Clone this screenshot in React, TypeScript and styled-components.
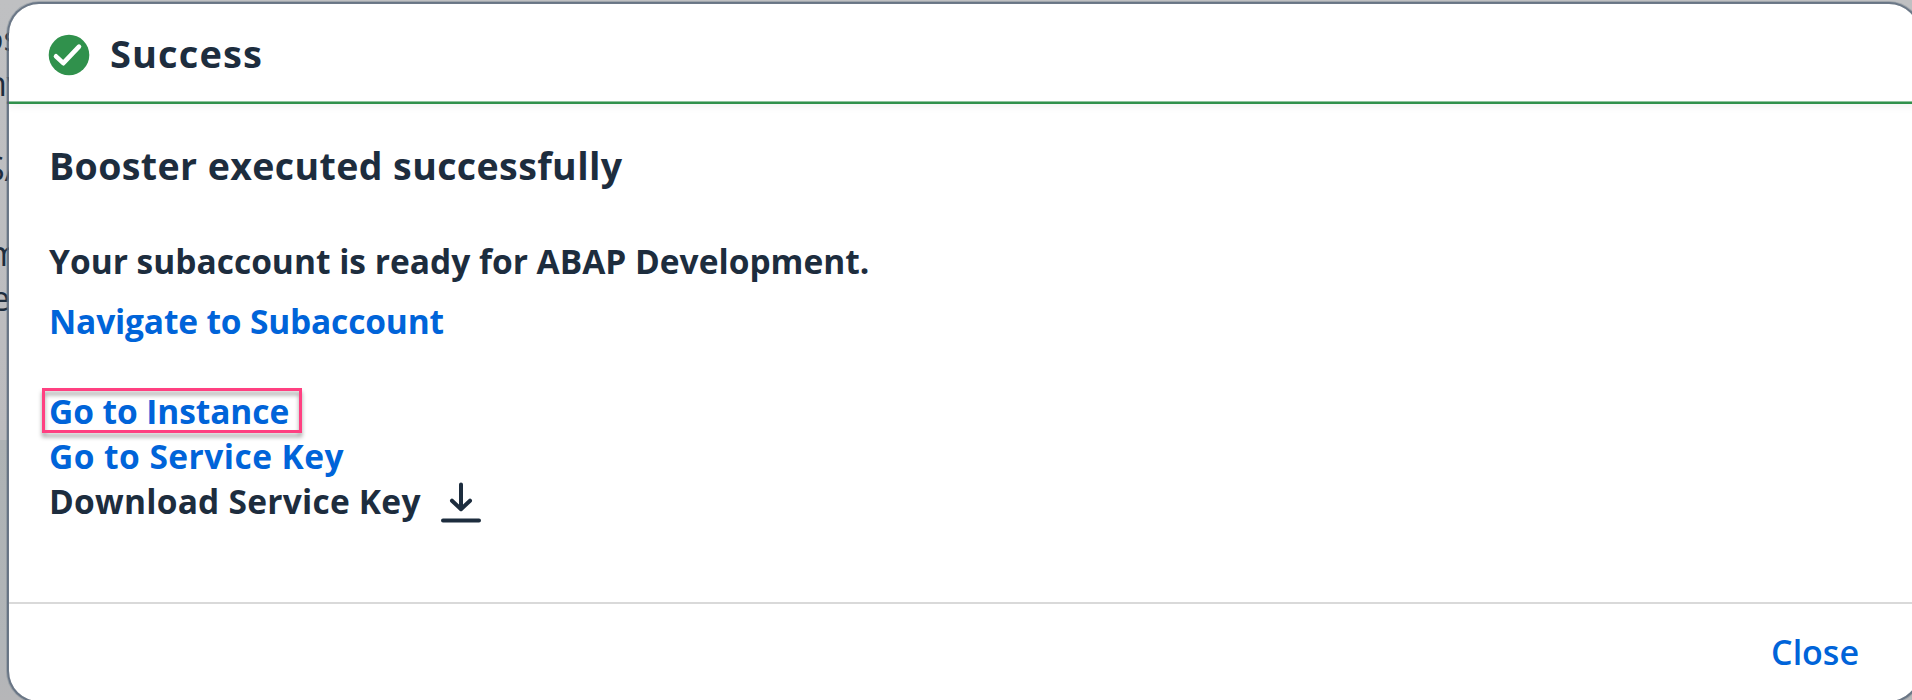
import React from "react";
import styled, { createGlobalStyle } from "styled-components";

const ink = "#1d2d3e";
const link = "#0064d9";

const GlobalStyle = createGlobalStyle`
  * { box-sizing: border-box; }
  body { margin: 0; overflow: hidden; }
  h1, h2, p { margin: 0; }
`;

const Page = styled.div`
  position: relative;
  width: 1912px;
  height: 700px;
  overflow: hidden;
  background: linear-gradient(#bfc0c2 0, #bbbbbe 440px, #adb2b4 440px, #b1b5b8 640px, #b6b6b8 700px);
  font-family: "Open Sans", "Noto Sans", sans-serif;
  color: ${ink};
`;

const Backdrop = styled.div`
  width: 10px;
  padding-top: 16px;
  overflow: hidden;
`;

const BackdropLine = styled.div<{ $shift: number; $gap?: number }>`
  margin-left: ${(p) => p.$shift}px;
  margin-top: ${(p) => p.$gap ?? 0}px;
  font-size: 34px;
  font-weight: 400;
  line-height: 45px;
  height: 45px;
  white-space: nowrap;
`;

const Dialog = styled.section`
  position: absolute;
  left: 7px;
  top: 2px;
  width: 1914px;
  height: 701px;
  display: flex;
  flex-direction: column;
  background: #fff;
  background-clip: padding-box;
  border: 2px solid rgba(91, 106, 124, 0.82);
  border-radius: 32px;
  box-shadow: 0 0 0 1px rgba(91, 106, 124, 0.3);
  overflow: hidden;
`;

const Header = styled.header`
  flex: none;
  height: 100px;
  display: flex;
  align-items: center;
  gap: 20px;
  padding: 3px 40px 0 39px;
  border-bottom: 2px solid #30914c;
  box-shadow: inset 0 -1px 0 rgba(48, 145, 76, 0.55), 0 2px 8px rgba(48, 80, 70, 0.08);
`;

const Title = styled.h1`
  font-size: 38px;
  font-weight: 700;
  line-height: 48px;
  letter-spacing: 1.1px;
  padding-bottom: 4px;
`;

const Content = styled.div`
  flex: 1;
  display: flex;
  flex-direction: column;
  align-items: flex-start;
  padding: 38px 40px 0;
`;

const Heading = styled.h2`
  font-size: 37.5px;
  font-weight: 700;
  line-height: 48px;
  letter-spacing: 0.4px;
  margin-bottom: 49px;
  white-space: nowrap;
`;

const Line = styled.p<{ $spacing?: number; $after?: number }>`
  display: flex;
  font-size: 33.5px;
  font-weight: 700;
  line-height: 45px;
  height: 45px;
  white-space: nowrap;
  letter-spacing: ${(p) => p.$spacing ?? 0}px;
  margin-bottom: ${(p) => p.$after ?? 0}px;
`;

const Link = styled.a`
  color: ${link};
  position: relative;
`;

const Highlight = styled.span`
  position: absolute;
  top: -1px;
  left: -7px;
  width: 260px;
  height: 45px;
  border: 3px solid #ff4081;
  filter: drop-shadow(0 4px 2px rgba(0, 0, 0, 0.38));
`;

const DownloadIcon = styled.svg`
  width: 42px;
  height: 45px;
  margin-left: 19px;
  flex: none;
`;

const Footer = styled.footer`
  flex: none;
  height: 99px;
  display: flex;
  justify-content: flex-end;
  padding: 26px 60px 0 0;
  border-top: 2px solid #d9d9d9;
`;

const CloseButton = styled.button`
  border: 0;
  padding: 0;
  height: 45px;
  background: none;
  font: 600 34px/45px "Open Sans", "Noto Sans", sans-serif;
  color: ${link};
`;

export default function App() {
  return (
    <>
      <GlobalStyle />
      <Page>
        <Backdrop>
          <BackdropLine $shift={-17}>os</BackdropLine>
          <BackdropLine $shift={-14}>ny</BackdropLine>
          <BackdropLine $shift={-14} $gap={40}>SA</BackdropLine>
          <BackdropLine $shift={-12} $gap={40}>m</BackdropLine>
          <BackdropLine $shift={-9}>e</BackdropLine>
        </Backdrop>
        <Dialog>
          <Header>
            <svg width="42" height="42" viewBox="0 0 42 42" fill="none">
              <circle cx="21" cy="21" r="20.3" fill="#30914c" />
              <path d="M8 22.3 L15.3 29.2 L31 12.7" stroke="#fff" strokeWidth="4.6" strokeLinecap="round" strokeLinejoin="round" />
            </svg>
            <Title>Success</Title>
          </Header>
          <Content>
            <Heading>Booster executed successfully</Heading>
            <Line $after={15}>Your subaccount is ready for ABAP Development.</Line>
            <Line $after={45} $spacing={-0.17}>
              <Link>Navigate to Subaccount</Link>
            </Line>
            <Line $spacing={-0.08}>
              <Link>
                Go to Instance
                <Highlight />
              </Link>
            </Line>
            <Line $spacing={0.46}>
              <Link>Go to Service Key</Link>
            </Line>
            <Line $spacing={0.24}>
              Download Service Key
              <DownloadIcon viewBox="0 0 42 45" fill="none" stroke={ink} strokeWidth="4" strokeLinecap="round" strokeLinejoin="round">
                <path d="M21 5.5 V29 M12 21.7 L21 30.2 L30 21.7 M3 41.5 H39" />
              </DownloadIcon>
            </Line>
          </Content>
          <Footer>
            <CloseButton>Close</CloseButton>
          </Footer>
        </Dialog>
      </Page>
    </>
  );
}
